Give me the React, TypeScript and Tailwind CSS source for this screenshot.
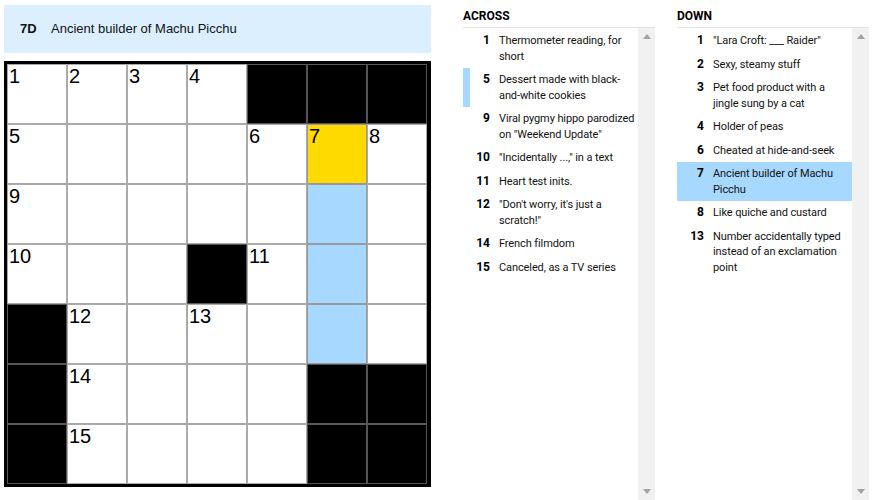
const B = null

// each cell: number string, '' for empty white, null for black
const grid: (string | null)[][] = [
  ['1', '2', '3', '4', B, B, B],
  ['5', '', '', '', '6', '7', '8'],
  ['9', '', '', '', '', '', ''],
  ['10', '', '', B, '11', '', ''],
  [B, '12', '', '13', '', '', ''],
  [B, '14', '', '', '', B, B],
  [B, '15', '', '', '', B, B],
]

const across = [
  { n: '1', text: 'Thermometer reading, for short' },
  { n: '5', text: 'Dessert made with black-and-white cookies', cross: true },
  { n: '9', text: 'Viral pygmy hippo parodized on "Weekend Update"' },
  { n: '10', text: '"Incidentally ...," in a text' },
  { n: '11', text: 'Heart test inits.' },
  { n: '12', text: '"Don\'t worry, it\'s just a scratch!"' },
  { n: '14', text: 'French filmdom' },
  { n: '15', text: 'Canceled, as a TV series' },
]

const down = [
  { n: '1', text: '"Lara Croft: ___ Raider"' },
  { n: '2', text: 'Sexy, steamy stuff' },
  { n: '3', text: 'Pet food product with a jingle sung by a cat' },
  { n: '4', text: 'Holder of peas' },
  { n: '6', text: 'Cheated at hide-and-seek' },
  { n: '7', text: 'Ancient builder of Machu Picchu', active: true },
  { n: '8', text: 'Like quiche and custard' },
  { n: '13', text: 'Number accidentally typed instead of an exclamation point' },
]

type Clue = { n: string; text: string; cross?: boolean; active?: boolean }

const ClueList = ({ title, clues }: { title: string; clues: Clue[] }) => (
  <div className="flex flex-col w-[192px] h-[495px]">
    <h3 className="text-[12px] font-bold text-black leading-none pt-[5px] pb-[5px] border-b border-[#e2e2e2]">{title}</h3>
    <div className="flex flex-1 min-h-0">
      <ul className="flex-1 pt-[1px]">
        {clues.map(c => (
          <li
            key={c.n}
            className={`flex py-[4px] border-l-[7px] ${c.active ? 'bg-[#a7d8ff] border-[#a7d8ff]' : c.cross ? 'border-[#a7d8ff]' : 'border-transparent'}`}
          >
            <span className="w-[20px] text-right font-bold text-[12px] leading-[15.5px] text-black shrink-0">{c.n}</span>
            <span className="pl-[9px] text-[11px] leading-[15.5px] tracking-[-0.1px] text-[#121212]">{c.text}</span>
          </li>
        ))}
      </ul>
      <div className="w-[17px] bg-[#f1f1f1] flex flex-col justify-between items-center py-[6px]">
        <svg width="8" height="5" viewBox="0 0 8 5"><path d="M0 5 L4 0 L8 5 Z" fill="#a3a3a3" /></svg>
        <svg width="8" height="5" viewBox="0 0 8 5"><path d="M0 0 L4 5 L8 0 Z" fill="#a3a3a3" /></svg>
      </div>
    </div>
  </div>
)

const App = () => {
  return (
    <div className="flex w-[876px] h-[500px] bg-white pl-[4px] pt-[5px]" style={{ fontFamily: 'Roboto, "Liberation Sans", sans-serif' }}>
      <div className="flex flex-col w-[427px]">
        <div className="h-[48px] bg-[#dcefff] flex items-center pl-[16px] text-[13px] text-[#121212]" style={{ fontFamily: '"Liberation Sans", Arial, sans-serif' }}>
          <span className="font-bold w-[31px]">7D</span>
          <span>Ancient builder of Machu Picchu</span>
        </div>
        <div className="mt-[8px] border-[3px] border-black grid grid-cols-[repeat(7,60px)] w-[427px] bg-black" style={{ fontFamily: '"Liberation Sans", Arial, sans-serif' }}>
          {grid.flat().map((cell, i) => {
            const col = i % 7
            const row = Math.floor(i / 7)
            const isBlack = cell === null
            const isSel = row === 1 && col === 5
            const isWord = col === 5 && row >= 2 && row <= 4
            const bg = isBlack ? 'bg-black border-[#555]' : isSel ? 'bg-[#ffda00] border-[#999]' : isWord ? 'bg-[#a7d8ff] border-[#999]' : 'bg-white border-[#aaa]'
            return (
              <div key={i} className={`h-[60px] border ${bg} pl-[1px] pt-[1px] text-[20px] leading-[20px] text-black`}>
                {cell}
              </div>
            )
          })}
        </div>
      </div>
      <div className="ml-[32px]">
        <ClueList title="ACROSS" clues={across} />
      </div>
      <div className="ml-[22px]">
        <ClueList title="DOWN" clues={down} />
      </div>
    </div>
  )
}

export default App
